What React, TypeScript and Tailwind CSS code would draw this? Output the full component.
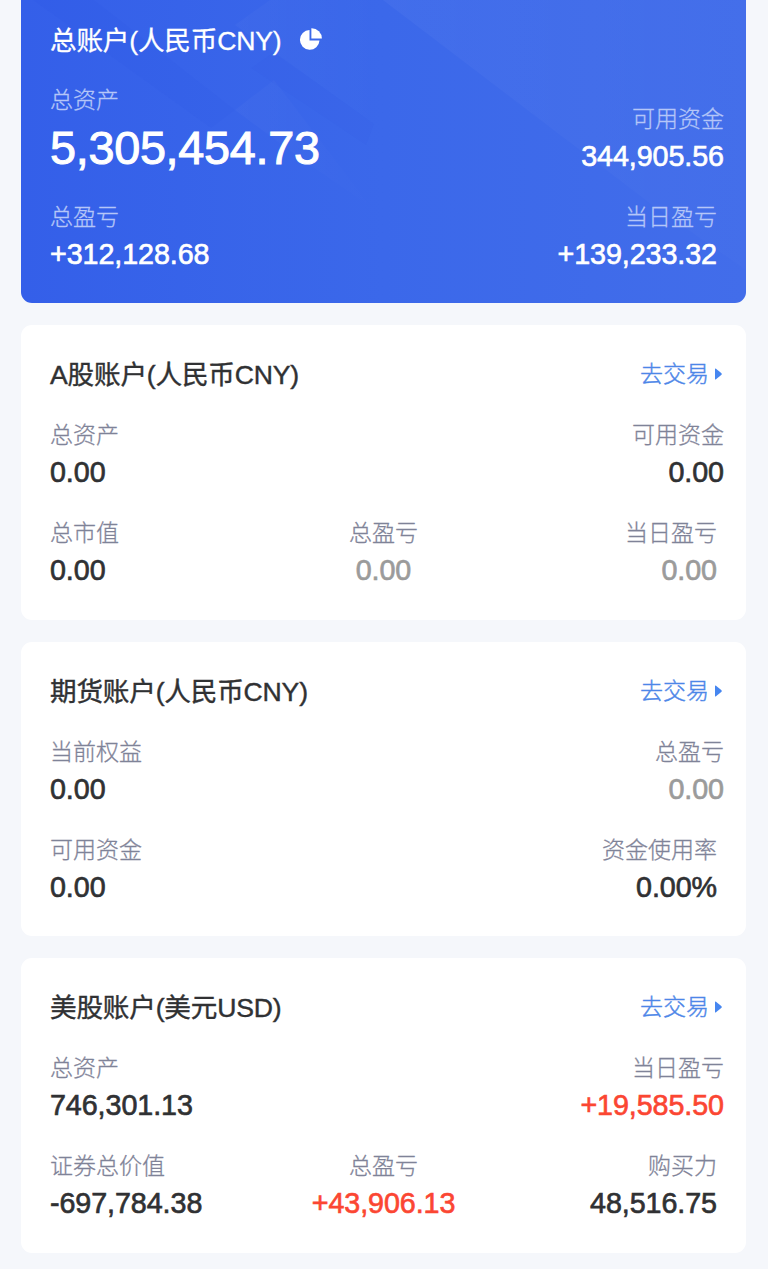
import clsx from "clsx";

type Align = "left" | "center" | "right";
type Tone = "dark" | "muted" | "up";

type StatItem = {
  label: string;
  value: string;
  tone?: Tone;
};

type Account = {
  title: string;
  top: StatItem[];
  bottom: StatItem[];
};

const ACCOUNTS: Account[] = [
  {
    title: "A股账户(人民币CNY)",
    top: [
      { label: "总资产", value: "0.00" },
      { label: "可用资金", value: "0.00" },
    ],
    bottom: [
      { label: "总市值", value: "0.00" },
      { label: "总盈亏", value: "0.00", tone: "muted" },
      { label: "当日盈亏", value: "0.00", tone: "muted" },
    ],
  },
  {
    title: "期货账户(人民币CNY)",
    top: [
      { label: "当前权益", value: "0.00" },
      { label: "总盈亏", value: "0.00", tone: "muted" },
    ],
    bottom: [
      { label: "可用资金", value: "0.00" },
      { label: "资金使用率", value: "0.00%" },
    ],
  },
  {
    title: "美股账户(美元USD)",
    top: [
      { label: "总资产", value: "746,301.13" },
      { label: "当日盈亏", value: "+19,585.50", tone: "up" },
    ],
    bottom: [
      { label: "证券总价值", value: "-697,784.38" },
      { label: "总盈亏", value: "+43,906.13", tone: "up" },
      { label: "购买力", value: "48,516.75" },
    ],
  },
];

const TONES: Record<Tone, string> = {
  dark: "text-[#303133]",
  muted: "text-[#9b9b9b]",
  up: "text-[#fb4632]",
};

const ALIGNS: Record<Align, string> = {
  left: "text-left",
  center: "text-center",
  right: "text-right",
};

const alignFor = (index: number, count: number): Align => {
  if (index === 0) return "left";
  return index === count - 1 ? "right" : "center";
};

const Stat = ({
  item,
  align,
  onBlue = false,
  large = false,
}: {
  item: StatItem;
  align: Align;
  onBlue?: boolean;
  large?: boolean;
}) => (
  <div className={clsx("whitespace-nowrap", ALIGNS[align])}>
    <div
      className={clsx(
        "h-9 text-[23px] leading-9 font-light [-webkit-text-stroke:0.3px]",
        onBlue ? "text-[#b5c6f8]" : "text-[#7f8398]",
      )}
    >
      {item.label}
    </div>
    <div
      className={clsx(
        large
          ? "h-[57px] text-[46.8px] leading-[61px] tracking-[-0.3px] [-webkit-text-stroke:1px]"
          : "h-[38px] text-[28.7px] leading-[39px] tracking-[-0.08px] [-webkit-text-stroke:0.65px]",
        onBlue ? "text-white" : TONES[item.tone ?? "dark"],
      )}
    >
      {item.value}
    </div>
  </div>
);

const PieIcon = () => (
  <svg className="mb-0.5 ml-[18px] h-6 w-6" viewBox="0 0 24 24" fill="white">
    <path d="M10.5 2.1A9.8 9.8 0 1 0 20.5 12.5H10.5Z" />
    <path d="M12.4 .3A10.2 10.2 0 0 1 22.9 10.6H12.4Z" />
  </svg>
);

const HeroPattern = () => (
  <svg className="absolute inset-0 h-full w-full" viewBox="0 0 725 303" fill="none">
    <path d="M362 0H725V270L630 204Z" fill="url(#beam)" />
    <path d="M249 0L214 25L362 130L480 84L362 0Z" fill="url(#facet)" />
    <path d="M12 0H73L214 110L190 128Z" fill="#1c49d8" fillOpacity="0.06" />
    <path d="M253 80L214 110L282 160L350 207Z" fill="url(#facet)" />
    <path d="M253 52L353 124L345 145L230 68Z" fill="#1c49d8" fillOpacity="0.03" />
    <defs>
      <linearGradient id="facet" x1="214" y1="0" x2="362" y2="0" gradientUnits="userSpaceOnUse">
        <stop stopColor="white" stopOpacity="0.025" />
        <stop offset="1" stopColor="white" stopOpacity="0" />
      </linearGradient>
      <linearGradient id="beam" x1="362" y1="0" x2="725" y2="0" gradientUnits="userSpaceOnUse">
        <stop stopColor="white" stopOpacity="0.035" />
        <stop offset="1" stopColor="white" stopOpacity="0.01" />
      </linearGradient>
    </defs>
  </svg>
);

const TotalCard = () => (
  <section className="relative h-[303px] overflow-hidden rounded-b-[11px] bg-linear-to-r from-[#345fe9] via-[#3b68ea] to-[#426dea] pt-[21px] pr-[22px] pl-[29px] text-white">
    <HeroPattern />
    <div className="relative">
      <div className="flex h-10 items-center">
        <h2 className="text-[26.6px] leading-[41px] tracking-[-0.18px] [-webkit-text-stroke:0.3px]">
          总账户(人民币CNY)
        </h2>
        <PieIcon />
      </div>
      <div className="mt-[21px] flex items-end justify-between">
        <Stat item={{ label: "总资产", value: "5,305,454.73" }} align="left" onBlue large />
        <Stat item={{ label: "可用资金", value: "344,905.56" }} align="right" onBlue />
      </div>
      <div className="mt-6 flex justify-between pr-[7px]">
        <Stat item={{ label: "总盈亏", value: "+312,128.68" }} align="left" onBlue />
        <Stat item={{ label: "当日盈亏", value: "+139,233.32" }} align="right" onBlue />
      </div>
    </div>
  </section>
);

const AccountCard = ({ account }: { account: Account }) => (
  <section className="h-[294.5px] rounded-[11px] bg-white pt-[30px] pr-[22px] pl-[29px]">
    <div className="flex h-10 items-center justify-between">
      <h2 className="text-[26.6px] leading-10 tracking-[-0.18px] text-[#303133] [-webkit-text-stroke:0.4px]">
        {account.title}
      </h2>
      <button className="flex h-10 items-center pb-0.5 text-[23px] leading-[38px] font-light text-[#4d86e8] [-webkit-text-stroke:0.4px]">
        去交易
        <svg className="mr-0.5 ml-1.5 h-3 w-[7px]" viewBox="0 0 7 12" fill="#4686f0">
          <path d="M0 1Q0 0 1 .7L6.5 5.3Q7 6 6.5 6.7L1 11.3Q0 12 0 11Z" />
        </svg>
      </button>
    </div>
    <div className="mt-[22px] flex justify-between">
      {account.top.map((item, i) => (
        <Stat key={item.label} item={item} align={alignFor(i, account.top.length)} />
      ))}
    </div>
    <div
      className={clsx(
        "mt-6 grid pr-[7px]",
        account.bottom.length === 3 ? "grid-cols-3" : "grid-cols-2",
      )}
    >
      {account.bottom.map((item, i) => (
        <Stat key={item.label} item={item} align={alignFor(i, account.bottom.length)} />
      ))}
    </div>
  </section>
);

export default function App() {
  return (
    <main className="flex h-[1269px] flex-col gap-[22px] overflow-hidden bg-[#f5f7fb] pr-[22px] pl-[21px] font-['Liberation_Sans','Noto_Sans_CJK_SC',sans-serif]">
      <TotalCard />
      {ACCOUNTS.map((account) => (
        <AccountCard key={account.title} account={account} />
      ))}
    </main>
  );
}
